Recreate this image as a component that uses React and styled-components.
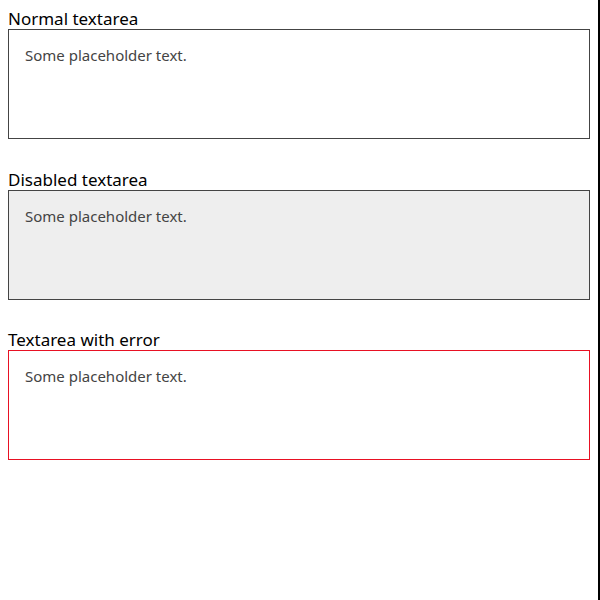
import React from 'react';
import styled, { createGlobalStyle } from 'styled-components';

const GlobalStyle = createGlobalStyle`
html {
    border-right: 2px solid #000;
    min-height: 100%;
    box-sizing: border-box;
}
body {
    margin: 8px;
    font-family: "Noto Sans", "Open Sans", sans-serif;
    background: #fff;
}
`;

const Field = styled.div`
    display: flex;
    flex-direction: column;
    margin-bottom: 29.5px;
`;

const Label = styled.label`
    font-size: 17px;
    line-height: 21px;
    color: #000;
`;

const TextArea = styled.textarea`
    display: block;
    box-sizing: border-box;
    width: 100%;
    height: 110px;
    margin: 0;
    padding: 15px 16px;
    resize: none;
    font-family: inherit;
    font-size: 15px;
    line-height: 21px;
    color: #333;
    background: ${props => (props.disabled ? '#eeeeee' : '#fff')};
    border: 1px solid ${props => (props.error ? '#e81123' : '#444')};
    border-radius: 0;
    outline: none;

    &::placeholder {
        color: #444;
        opacity: 1;
    }
`;

const fields = [
    { id: 'normal', label: 'Normal textarea' },
    { id: 'disabled', label: 'Disabled textarea', disabled: true },
    { id: 'error', label: 'Textarea with error', error: true },
];

const App = () => {
    return (
        <>
            <GlobalStyle />
            {fields.map(f => (
                <Field key={f.id}>
                    <Label htmlFor={f.id}>{f.label}</Label>
                    <TextArea
                        id={f.id}
                        placeholder="Some placeholder text."
                        disabled={f.disabled}
                        error={f.error ? 1 : 0}
                    />
                </Field>
            ))}
        </>
    );
};

export default App;
